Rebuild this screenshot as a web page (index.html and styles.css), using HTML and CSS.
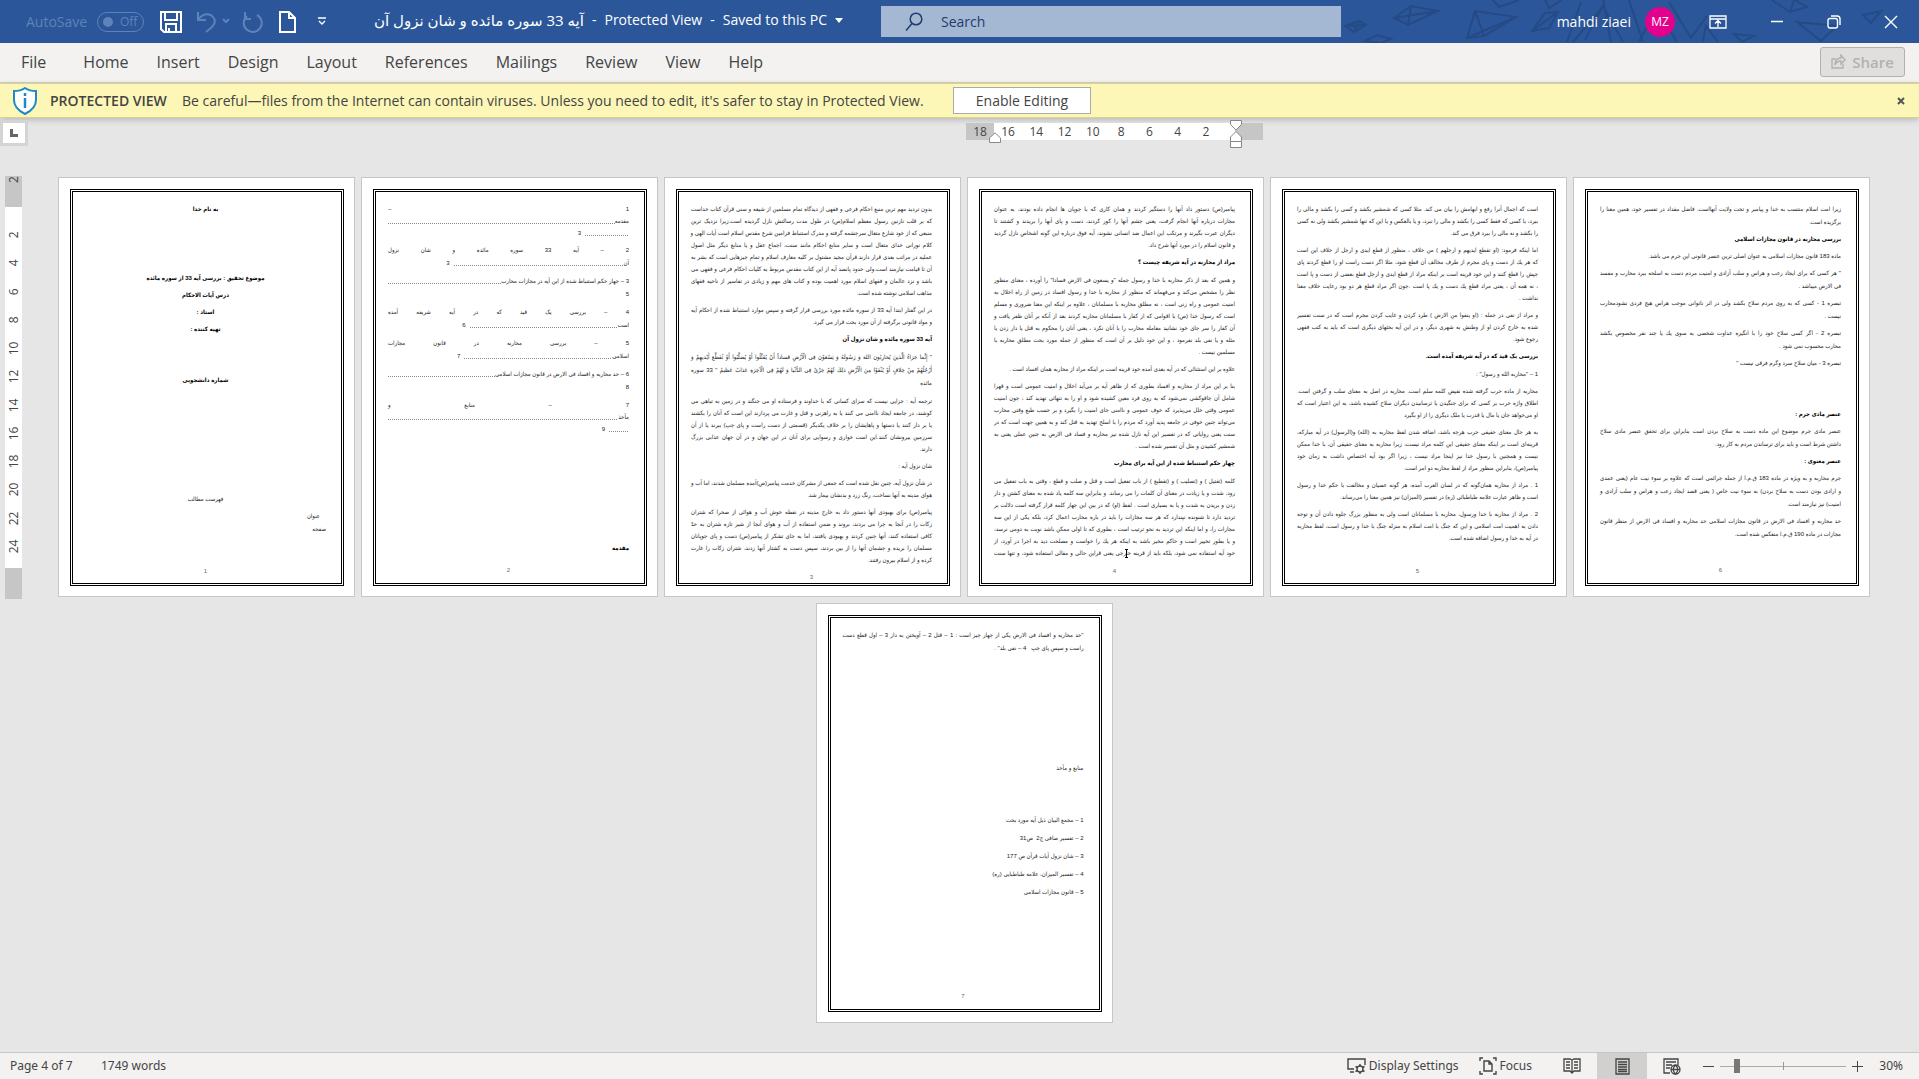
FILE: index.html
```html
<!DOCTYPE html>
<html lang="en">
<head>
<meta charset="utf-8">
<title>Word - Protected View</title>
<link rel="stylesheet" href="styles.css">
</head>
<body>
<header class="titlebar">
  <svg class="planes" width="580" height="43" viewBox="0 0 580 43" fill="none" stroke="#254a85" stroke-width="2" aria-hidden="true">
    <path d="M6 26l14-5 7 4-12 7zM6 26l21-1M15 32l5-11M26 41l12-6 14 4-10 4zM55 18l17-12 27 5-30 14zM72 6l-3 19M55 18l44-7M128 38l8-27 41 6-32 19zM136 11l9 25M128 38l49-21M193 31l13-18 13-1-9 16zM193 31l26-19M154 0l6 7 20-7M206 0l4 8 13-8M228 42l14-40M234 42l30-36 20 36M264 6l-18 34M264 0l8 42M290 0l14 42M300 42l18-34 20 34M330 2l22 36 16-22M364 41l3-15 12 16M395 34l20 2-12 6zM433 0l18 12 17-5-12-7M451 12l4-12M458 22l40 4-16 15zM458 22l24 19M524 15l18-4-10 12zM524 15l8 8"/>
  </svg>
  <div class="quick">
    <span class="autosave">AutoSave</span>
    <button class="toggle" aria-label="AutoSave off"><i></i>Off</button>
    <button class="ic" aria-label="Save"><svg width="22" height="22" viewBox="0 0 22 22" fill="none" stroke="#fff" stroke-width="2"><path d="M1 1h20v20H4l-3-3zM5 1v8h12V1M6 21v-8h10v8M9 17v4"/></svg></button>
    <button class="ic dim undo" aria-label="Undo"><svg width="34" height="22" viewBox="0 0 34 22" fill="none" stroke="#5f82b8" stroke-width="2"><path d="M2 1v8h8M2 9C6 3 13 1 17 6s1 9-7 15M27 8l3 3 3-3"/></svg></button>
    <button class="ic dim redo" aria-label="Redo"><svg width="22" height="22" viewBox="0 0 22 22" fill="none" stroke="#5f82b8" stroke-width="2"><path d="M4 1v7h6M6 5A9 9 0 1 0 16 4"/></svg></button>
    <button class="ic doc" aria-label="New"><svg width="17" height="22" viewBox="0 0 17 22" fill="none" stroke="#fff" stroke-width="2"><path d="M1 1h9l6 6v14H1zM10 1v6h6"/></svg></button>
    <button class="ic more" aria-label="Customize"><svg width="10" height="9" viewBox="0 0 10 9" fill="none" stroke="#fff" stroke-width="1.4"><path d="M1 1h8M2 4l3 3 3-3"/></svg></button>
  </div>
  <h1 class="doc-title"><bdi lang="fa">آیه 33 سوره مائده و شان نزول آن</bdi><span>-</span><span>Protected View</span><span>-</span><span>Saved to this PC</span><svg width="8" height="5" viewBox="0 0 8 5"><path d="M0 0h8L4 5z" fill="#fff"/></svg></h1>
  <label class="search"><svg width="18" height="19" viewBox="0 0 18 19" fill="none" stroke="#1e3c6e" stroke-width="1.5"><circle cx="11" cy="7" r="5.8"/><path d="M7 11.500l-6 7"/></svg><input type="text" placeholder="Search" aria-label="Search"></label>
  <div class="account">
    <span class="user">mahdi ziaei</span>
    <span class="avatar">MZ</span>
    <button class="ic" aria-label="Ribbon display"><svg width="18" height="14" viewBox="0 0 18 14" fill="none" stroke="#fff" stroke-width="1.300"><path d="M1 1h16v12H1zM1 4h16M9 12V6M6 8.500l3-3 3 3"/></svg></button>
    <button class="ic" aria-label="Minimize"><svg width="14" height="14" viewBox="0 0 14 14" stroke="#fff" stroke-width="1.500"><path d="M1 6.500h12"/></svg></button>
    <button class="ic" aria-label="Restore"><svg width="14" height="14" viewBox="0 0 14 14" fill="none" stroke="#fff" stroke-width="1.400"><rect x="1" y="3.500" width="9.500" height="9.500" rx="2"/><path d="M4 1h6a3 3 0 0 1 3 3v6"/></svg></button>
    <button class="ic" aria-label="Close"><svg width="14" height="14" viewBox="0 0 14 14" stroke="#fff" stroke-width="1.400"><path d="M1 1l12 12M13 1L1 13"/></svg></button>
  </div>
</header>
<nav class="tabs">
  <a href="#" class="file">File</a><a href="#">Home</a><a href="#">Insert</a><a href="#">Design</a><a href="#">Layout</a><a href="#">References</a><a href="#">Mailings</a><a href="#">Review</a><a href="#">View</a><a href="#">Help</a>
  <button class="share" disabled><svg width="15" height="15" viewBox="0 0 15 15" fill="none" stroke="#b3b1af" stroke-width="1.400"><path d="M5 5H1v9h11v-4M4 11c0-5 3-7 6-7V1l4 5-4 4V7c-3 0-5 1-6 4z"/></svg>Share</button>
</nav>
<section class="message">
  <svg width="26" height="28" viewBox="0 0 26 28" fill="#fff" stroke="#1e88c9" stroke-width="2"><path d="M13 1c3 2 7 3 11 3v9c0 7-5 11-11 14C7 24 2 20 2 13V4c4 0 8-1 11-3z"/><path d="M13 11v10M13 6v3" stroke-width="2.500"/></svg>
  <strong>PROTECTED VIEW</strong>
  <span class="msg">Be careful—files from the Internet can contain viruses. Unless you need to edit, it's safer to stay in Protected View.</span>
  <button class="enable">Enable Editing</button>
  <button class="dismiss" aria-label="Close message"><svg width="8" height="8" viewBox="0 0 8 8" stroke="#555" stroke-width="2"><path d="M1 1l6 6M7 1L1 7"/></svg></button>
</section>
<div class="ruler-row">
  <button class="tabstop" aria-label="Tab stop"><svg width="8" height="8" viewBox="0 0 8 8" fill="none" stroke="#666" stroke-width="3"><path d="M1.500 0v6.500H8"/></svg></button>
  <div class="hruler">
    <div class="edge">18</div>
    <div class="scale"><span>16</span><span>14</span><span>12</span><span>10</span><span>8</span><span>6</span><span>4</span><span>2</span></div>
    <div class="edge"></div>
    <svg class="mark-left" width="12" height="11" viewBox="0 0 12 11" fill="#fff" stroke="#888"><path d="M.5 10.500V6L6 .8 11.500 6v4.500z"/></svg>
    <svg class="mark-right" width="12" height="28" viewBox="0 0 12 28" fill="#fff" stroke="#888"><path d="M.5.5h11v4L6 10 .5 4.500zM.5 21.500V17L6 11.500l5.500 5.500v4.500zM.5 21.500h11v6H.5z"/></svg>
  </div>
</div>
<main class="workspace">
  <div class="vruler">
    <div class="edge top">2</div>
    <div class="scale"><span>2</span><span>4</span><span>6</span><span>8</span><span>10</span><span>12</span><span>14</span><span>16</span><span>18</span><span>20</span><span>22</span><span>24</span></div>
    <div class="edge bottom"></div>
  </div>
  <div class="pages" lang="fa" dir="rtl">
    <article class="page"><div class="frame cover">
      <h2>به نام خدا</h2>
      <h2 class="after-lg">موضوع تحقیق : بررسی آیه 33 از سوره مائده</h2>
      <h2>درس آیات الاحکام</h2>
      <h2>استاد :</h2>
      <h2>تهیه کننده :</h2>
      <h2 class="after-md">شماره دانشجویی</h2>
      <p class="center after-xl">فهرست مطالب</p>
      <p class="indent">عنوان</p>
      <p class="tight">صفحه</p>
      <footer>1</footer>
    </div></article>

    <article class="page"><div class="frame toc">
      <p class="three"><span class="fill">1 –</span><span class="row">مقدمه<i class="dots"></i></span><span class="row"><i class="dots w44"></i>3</span></p>
      <p><span class="fill">2 – آیه 33 سوره مائده و شان نزول</span><span class="row">آن<i class="dots w170"></i>3</span></p>
      <p><span class="row">3 – چهار حکم استنباط شده از این آیه در مجازات محارب<i class="dots"></i></span><span>5</span></p>
      <p><span class="fill">4 – بررسی یک قید که در آیه شریفه آمده</span><span class="row">است<i class="dots w148"></i>6</span></p>
      <p><span class="fill">5 – بررسی محاربه در قانون مجازات</span><span class="row">اسلامی<i class="dots w148"></i>7</span></p>
      <p><span class="row">6 – حد محاربه و افساد فی الارض در قانون مجازات اسلامی<i class="dots"></i></span><span>8</span></p>
      <p class="three"><span class="fill">7 – منابع و</span><span class="row">مآخذ<i class="dots"></i></span><span class="row"><i class="dots w20"></i>9</span></p>
      <h2 class="after-xl">مقدمه</h2>
      <footer>2</footer>
    </div></article>

    <article class="page"><div class="frame">
      <p><span>بدون تردید مهم ترین منبع احکام فرعی و فقهی از دیدگاه تمام مسلمین از شیعه و سنی قرآن کتاب خداست</span><span>که بر قلب نازنین رسول معظم اسلام(ص) در طول مدت رسالتش نازل گردیده است.زیرا نزدیک ترین</span><span>منبعی که از خود شارع متعال سرچشمه گرفته و مدرک استنباط فرامین شرع مقدس اسلام است آیات الهی و</span><span>کلام نورانی خدای متعال است و سایر منابع احکام مانند سنت، اجماع عقل و یا منابع دیگر مثل اصول</span><span>عملیه در مراتب بعدی قرار دارند.قرآن مجید مشتول بر کلیه معارف اسلام و تمام چیزهایی است که بشر به</span><span>آن تا قیامت نیازمند است.ولی حدود پانصد آیه از این کتاب مقدس مربوط به کلیات احکام فرعی و فقهی می</span><span>باشد و نزد عالمان و فقهای اسلام مورد اهمیت بوده و کتاب های مهم و زیادی در تفاسیر از ناحیه فقهای</span><span>مذاهب اسلامی نوشته شده است.</span></p>
      <p><span>در این گفتار ابتدا آیه 33 از سوره مائده مورد بررسی قرار گرفته و سپس موارد استنباط شده از احکام آیه</span><span>و مواد قانونی برگرفته از آن مورد بحث قرار می گیرد.</span></p>
      <h2>آیه 33 سوره مائده و شان نزول آن</h2>
      <p class="verse"><span>" إِنَّما جَزاءُ الَّذینَ یُحارِبُونَ اللهَ وَ رَسُولَهُ وَ یَسْعَوْنَ فِی الْأَرْضِ فَساداً أَنْ یُقَتَّلُوا أَوْ یُصَلَّبُوا أَوْ تُقَطَّعَ أَیْدیهِمْ وَ</span><span>أَرْجُلُهُمْ مِنْ خِلافٍ أَوْ یُنْفَوْا مِنَ الْأَرْضِ ذلِكَ لَهُمْ خِزْیٌ فِی الدُّنْیا وَ لَهُمْ فِی الْآخِرَةِ عَذابٌ عَظیمٌ " 33 سوره</span><span>مائده</span></p>
      <p><span>ترجمه آیه : جزایی نیست که سزای کسانی که با خداوند و فرستاده او می جنگند و در زمین به تباهی می</span><span>کوشند، در جامعه ایجاد ناامنی می کنند یا به راهزنی و قتل و غارت می پردازند این است که آنان را بکشند</span><span>یا بر دار کنند یا دستها و پاهایشان را بر خلاف یکدیگر (قسمتی از دست راست و پای چپ) ببرند یا از آن</span><span>سرزمین بیرونشان کنند.این است خواری و رسوایی برای آنان در این جهان و در آن جهان عذابی بزرگ</span><span>دارند.</span></p>
      <p><span>شان نزول آیه :</span></p>
      <p><span>در شأن نزول آیه، چنین نقل شده است که  جمعی از مشرکان خدمت پیامبر(ص)آمده مسلمان شدند، اما آب و</span><span>هوای مدینه به آنها نساخت، رنگ  زرد و بدنشان بیمار شد.</span></p>
      <p><span>پیامبر(ص) برای بهبودی آنها دستور داد به خارج مدینه  در نقطه خوش آب و هوائی از صحرا که شتران</span><span>زکات را در آنجا به چرا می بردند، بروند و ضمن استفاده از آب و هوای آنجا از شیر تازه شتران به حدّ</span><span>کافی استفاده کنند، آنها چنین کردند و بهبودی یافتند، اما به جای تشکر از پیامبر(ص) دست و پای چوپانان</span><span>مسلمان را بریده و چشمان آنها را از بین بردند، سپس دست به کشتار آنها زدند، شتران زکات را غارت</span><span>کرده و از اسلام بیرون رفتند.</span></p>
      <footer>3</footer>
    </div></article>

    <article class="page"><div class="frame">
      <p><span>پیامبر(ص) دستور داد آنها را دستگیر کردند و همان کاری که با چوپان ها انجام داده بودند، به عنوان</span><span>مجازات درباره آنها انجام گرفت، یعنی چشم آنها را کور کردند، دست و پای آنها را بریدند و کشتند تا</span><span>دیگران عبرت بگیرند و مرتکب این اعمال ضد انسانی نشوند، آیه فوق درباره این گونه اشخاص نازل گردید</span><span>و قانون اسلام را در مورد آنها شرح داد.</span></p>
      <h2>مراد از محاربه در آیه شریفه چیست ؟</h2>
      <p><span>و همین که بعد از ذکر محاربه با خدا و رسول جمله  "و یسعون فی الارض فسادا" را آورده ، معنای منظور</span><span>نظر را مشخص می‌کند و می‌فهماند که منظور از محاربه با خدا و رسول افساد در زمین از راه اخلال به</span><span>امنیت عمومی و راه زنی است ، نه مطلق محاربه با مسلمانان ، علاوه بر اینکه این معنا ضروری و مسلم</span><span>است که رسول خدا (ص) با اقوامی که از کفار با مسلمانان محاربه کردند بعد از آنکه بر آنان ظفر یافت و</span><span>آن کفار را سر جای خود نشانید معامله محارب را با آنان نکرد ، یعنی آنان را محکوم به قتل یا دار زدن یا</span><span>مثله و یا نفی بلد نفرمود ، و این خود دلیل بر آن است که منظور از جمله مورد بحث مطلق محاربه با</span><span>مسلمین نیست .</span></p>
      <p><span>علاوه بر این استثنائی که در آیه بعدی آمده خود قرینه است بر اینکه مراد از محاربه همان افساد است .</span></p>
      <p><span>بنا بر این مراد از محاربه و افساد بطوری که از ظاهر آیه بر می‌آید اخلال و امنیت عمومی است و قهرا</span><span>شامل آن چاقوکشی نمی‌شود که به روی فرد معین کشیده شود و او را به تنهائی تهدید کند ، چون امنیت</span><span>عمومی وقتی خلل می‌پذیرد که خوف عمومی و ناامنی جای امنیت را بگیرد و بر حسب طبع وقتی محارب</span><span>می‌تواند چنین خوفی در جامعه پدید آورد که مردم را با اسلح تهدید به قتل کند و به همین جهت است که در</span><span>سنت یعنی روایاتی که در تفسیر این آیه نازل شده نیز محاربه و فساد فی الارض به چنین عملی یعنی به</span><span>شمشیر کشیدن و مثل آن تفسیر شده است .</span></p>
      <h2>چهار حکم استنباط شده از این آیه برای محارب</h2>
      <p class="run-on"><span>کلمه (تقتیل ) و (تصلیب ) و (تقطیع ) از باب تفعیل است و قتل و صلب و قطع ، وقتی به باب تفعیل می</span><span>رود، شدت و یا زیادت در معنای آن کلمات را می رساند. و بنابراین سه کلمه یاد شده به معنای کشتن و دار</span><span>زدن و بریدن به شدت و یا به بسیاری است . لفظ (او) که در بین این چهار کلمه قرار گرفته است دلالت بر</span><span>تردید دارد تا شنونده نپندارد که هر سه مجازات را باید در باره محارب اعمال کرد، بلکه یکی از این سه</span><span>مجازات را، و اما اینکه این تردید به نحو ترتیب است ، بطوری که تا اولی ممکن باشد نوبت به دومی نرسد،</span><span>و یا بطور تخییر است و حاکم مخیر باشد به اینکه هر یك را خواست و مصلحت دید به اجرا در آورد، از</span><span>خود آیه استفاده نمی شود، بلکه باید از قرینه خارجی یعنی قراین حالی و مقالی استفاده شود، و تنها سنت</span></p>
      <footer>4</footer>
      <svg class="ibeam" width="5" height="9" viewBox="0 0 5 9" stroke="#000"><path d="M1 .5h3M2.500 0v9M1 8.500h3"/></svg>
    </div></article>

    <article class="page"><div class="frame">
      <p><span>است که اجمال آنرا رفع و ابهامش را بیان می کند. مثلا کسی که شمشیر بکشد و کسی را بکشد و مالی را</span><span>ببرد، با کسی که فقط کسی را بکشد و مالی را نبرد، و یا بالعکس و یا این که تنها شمشیر بکشد ولی نه کسی</span><span>را بکشد و نه مالی را ببرد فرق می کند.</span></p>
      <p><span> اما اینکه فرمود: (او تقطع ایدیهم و ارجلهم ) من خلاف ، منظور از قطع ایدی و ارجل از خلاف این است</span><span>که هر یك از دست و پای مجرم از طرف مخالف آن قطع شود، مثلا اگر دست راست او را قطع کردند پای</span><span>چپش را قطع کنند و این خود قرینه است بر اینکه مراد از قطع ایدی و ارجل قطع بعضی از دست و پا است</span><span>، نه همه آن ، یعنی مراد قطع یك دست و یك پا است .چون اگر مراد قطع هر دو بود رعایت خلاف معنا</span><span>نداشت .</span></p>
      <p><span>و مراد از نفی در جمله : (او ینفوا من الارض ) طرد کردن و غایب کردن مجرم است که در سنت تفسیر</span><span>شده به خارج کردن او از وطنش به شهری دیگر، و در این آیه بحثهای دیگری است که باید به کتب فقهی</span><span>رجوع شود.</span></p>
      <h2>بررسی یک قید که در آیه شریفه آمده است.</h2>
      <p><span>1 – "محاربه الله و رسول" :</span></p>
      <p><span>محاربه از ماده حرب گرفته شده  نقیض کلمه سلم است. محاربه در اصل به معنای سلب و گرفتن است.</span><span>اطلاق واژه حرب بر کسی که برای جنگیدن یا ترسانیدن دیگران سلاح کشیده باشد، به این اعتبار است که</span><span>او می‌خواهد جان یا مال یا قدرت یا ملک دیگری را از او بگیرد</span></p>
      <p><span>به هر حال معنای حقیقی حرب هرچه باشد، اضافه شدن لفظ محاربه به (الله) و(الرسول) در آیه مبارکه،</span><span>قرینه‌ای است بر اینکه معنای حقیقی این کلمه مراد نیست، زیرا محاربه به معنای حقیقی آن، با خدا ممکن</span><span>نیست و همچنین با رسول خدا نیز اینجا مراد نیست ، زیرا اگر بود آیه اختصاص داشت به زمان خود</span><span>پیامبر(ص)، بنابراین منظور مراد از لفظ محاربه دو امر است.</span></p>
      <p><span>1 . مراد از محاربه همان‌گونه که در لسان العرب آمده، هر گونه عصیان و مخالفت با حکم خدا و رسول</span><span>است و ظاهر عبارت علامه طباطبائی (ره) در تفسیر (المیزان) نیز همین معنا را می‌رساند.</span></p>
      <p><span>2 . مراد از محاربه با خدا ورسول، محاربه با مسلمانان است ولی به منظور بزرگ جلوه دادن آن و توجه</span><span>دادن به اهمیت امت اسلامی و این که جنگ با امت اسلام به منزله جنگ با خدا و رسول است، لفظ محاربه</span><span>در آیه به خدا و رسول اضافه شده است.</span></p>
      <footer>5</footer>
    </div></article>

    <article class="page"><div class="frame loose">
      <p><span>زیرا امت اسلام منتسب به خدا و پیامبر و تحت ولایت آنهااست. فاضل مقداد در تفسیر خود، همین معنا را</span><span>برگزیده است.</span></p>
      <h2>بررسی محاربه در قانون مجازات اسلامی</h2>
      <p><span>ماده 183 قانون مجازات اسلامی به عنوان اصلی ترین عنصر قانونی این جرم می باشد.</span></p>
      <p><span>" هر کسی که برای ایجاد رعب و هراس و سلب آزادی و امنیت مردم دست به اسلحه ببرد محارب و مفسد</span><span>فی الارض میباشد .</span></p>
      <p><span>تبصره 1 - کسی که به روی مردم سلاح بکشد ولی در اثر ناتوانی موجب هراس هیچ فردی نشودمحارب</span><span>نیست .</span></p>
      <p><span>تبصره 2 - اگر کسی سلاح خود را با انگیزه عداوت شخصی به سوی یك یا چند نفر مخصوص بکشد</span><span>محارب محسوب نمی شود .</span></p>
      <p><span>تبصره 3 - میان سلاح سرد وگرم فرقی نیست "</span></p>
      <h2 class="after-md">عنصر مادی جرم :</h2>
      <p><span>عنصر مادی جرم موضوع این ماده دست به سلاح بردن است بنابراین برای تحقق عنصر مادی سلاح</span><span>داشتن شرط است و باید برای ترساندن مردم به کار رود.</span></p>
      <h2>عنصر معنوی :</h2>
      <p><span>جرم محاربه و به ویژه در ماده 183 ق.م.ا از جمله جرائمی است که علاوه بر سوء نیت عام (یعنی عمدی</span><span>و ارادی بودن دست به سلاح بردن) به سوء نیت خاص ( یعنی قصد ایجاد رعب و هراس و سلب آزادی و</span><span>امنیت) نیز نیازمند است.</span></p>
      <p><span>حد محاربه و افساد فی الارض در قانون مجازات اسلامی حد محاربه و افساد فی الارض از منظر قانون</span><span>مجازات در ماده 190 ق.م.ا منعکس شده است.</span></p>
      <footer>6</footer>
    </div></article>

    <article class="page"><div class="frame toc">
      <p><span class="fill">"حد محاربه و افساد فی الارض یکی از چهار چیز است : 1 – قتل 2 – آویختن به دار  3 – اول قطع دست</span><span>راست و سپس پای چپ &nbsp; 4 – نفی بلد" .</span></p>
      <p class="after-xl">منابع و مآخذ</p>
      <p class="after-md">1 – مجمع البیان ذیل آیه مورد بحث</p>
      <p>2 – تفسیر صافی ج2 &nbsp;ص31</p>
      <p>3 – شان نزول آیات قرآن ص 177</p>
      <p>4 – تفسیر المیزان، علامه طباطبایی (ره)</p>
      <p>5 – قانون مجازات اسلامی</p>
      <footer>7</footer>
    </div></article>
  </div>
</main>
<footer class="status">
  <span class="pg">Page 4 of 7</span><span>1749 words</span>
  <div class="tools">
    <button class="tool"><svg width="19" height="18" viewBox="0 0 19 18" fill="none" stroke="#444" stroke-width="1.400"><path d="M7 12H1V2h17v6M3 15h4"/><circle cx="13" cy="12" r="3"/><path d="M13 7v2M13 15v2M8.500 9.500l2 1M15.500 13.500l2 1M8.500 14.500l2-1M15.500 10.500l2-1"/></svg>Display Settings</button>
    <button class="tool focus"><svg width="18" height="18" viewBox="0 0 18 18" fill="none" stroke="#444" stroke-width="1.400"><path d="M4 1H1v3M14 1h3v3M1 14v3h3M17 14v3h-3M5 4h5l3 3v7H5zM10 4v3h3"/></svg>Focus</button>
    <button class="view" aria-label="Read mode"><svg width="18" height="16" viewBox="0 0 18 16" fill="none" stroke="#444" stroke-width="1.300"><path d="M1 1h6l2 1 2-1h6v12h-6l-2 2-2-2H1zM9 2v12M3 4h4M3 7h4M3 10h4M11 4h4M11 7h4M11 10h4"/></svg></button>
    <button class="view active" aria-label="Print layout"><svg width="15" height="17" viewBox="0 0 15 17" fill="none" stroke="#444" stroke-width="1.300"><path d="M1 1h13v15H1zM3 4h9M3 6.500h9M3 9h9M3 11.500h9M3 13.500h9"/></svg></button>
    <button class="view" aria-label="Web layout"><svg width="18" height="17" viewBox="0 0 18 17" fill="none" stroke="#444" stroke-width="1.300"><path d="M7 15H1V1h14v6M3 4h10M3 7h6M3 10h4"/><circle cx="12.500" cy="11.500" r="4.500"/><path d="M8 11.500h9M12.500 7c-3 3-3 6 0 9M12.500 7c3 3 3 6 0 9"/></svg></button>
    <button class="zoom-btn" aria-label="Zoom out"><svg width="11" height="11" viewBox="0 0 11 11" stroke="#444"><path d="M0 5.500h11"/></svg></button>
    <input type="range" min="0" max="100" value="12" aria-label="Zoom">
    <button class="zoom-btn" aria-label="Zoom in"><svg width="11" height="11" viewBox="0 0 11 11" stroke="#444"><path d="M0 5.500h11M5.500 0v11"/></svg></button>
    <span class="pct">30%</span>
  </div>
</footer>
</body>
</html>
```
FILE: styles.css
```css
* { box-sizing: border-box; margin: 0; padding: 0; }
body { min-height: 100vh; display: flex; flex-direction: column; background: #e6e6e6; color: #444; font: 14px/20px "Open Sans", "Noto Sans", "DejaVu Sans", sans-serif; }
button { font: inherit; color: inherit; background: none; border: 0; display: flex; align-items: center; }
a { color: inherit; text-decoration: none; }
svg { flex: none; }

/* title bar */
.titlebar { position: relative; display: flex; align-items: center; height: 43px; background: #2b579a; color: #fff; }
.planes { position: absolute; right: 0; top: 0; }
.quick { display: flex; align-items: center; width: 374px; padding-left: 26px; }
.autosave { color: #5f82b8; width: 71px; }
.toggle { width: 47px; height: 20px; border: 1px solid #5f82b8; border-radius: 10px; color: #5f82b8; font-size: 12px; gap: 7px; padding-left: 5px; margin-right: 16px; }
.toggle i { width: 10px; height: 10px; border-radius: 50%; background: #5f82b8; }
.undo { margin-left: 14px; }
.redo { margin-left: 11px; }
.doc { margin-left: 16px; }
.more { margin-left: 21px; }
.doc-title { display: flex; align-items: center; gap: 8px; width: 507px; padding-bottom: 3px; font-size: 14px; font-weight: 400; white-space: nowrap; }
.doc-title bdi { font-size: 15px; }
.search { position: relative; display: flex; align-items: center; flex: 0 1 460px; height: 31px; background: #a5b8d3; padding-left: 24px; gap: 18px; }
.search input { flex: 1; min-width: 0; border: 0; background: none; font: inherit; outline: 0; }
.search input::placeholder { color: #1e3c6e; opacity: 1; }
.account { position: relative; display: flex; align-items: center; margin-left: auto; padding-right: 21px; gap: 43px; }
.user { margin-right: -29px; }
.avatar { width: 30px; height: 30px; line-height: 30px; border-radius: 50%; background: #e3008c; text-align: center; font-size: 12px; margin-right: -9px; }

/* ribbon tabs */
.tabs { display: flex; align-items: center; gap: 28px; height: 40px; padding: 0 14px 2px 21px; background: #f3f2f1; font-size: 16px; border-bottom: 1px solid #d2d0ce; }
.tabs .file { margin-right: 9px; }
.share { margin-left: auto; height: 30px; width: 85px; justify-content: center; gap: 6px; border: 1px solid #b3b1af; border-radius: 3px; background: #e1dfdd; color: #b3b1af; font-weight: 600; font-size: 15px; }

/* protected view message */
.message { display: flex; align-items: center; height: 35px; padding: 0 14px 0 12px; background: #fcf7b6; border: solid #d8d48c; border-width: 1px 0; box-shadow: 0 2px 6px #0003; }
.message strong { width: 132px; margin-left: 12px; font-weight: 600; white-space: nowrap; }
.msg { min-width: 771px; white-space: nowrap; }
.enable { width: 138px; height: 27px; justify-content: center; background: #fff; border: 1px solid #ababab; }
.dismiss { margin-left: auto; }

/* rulers */
.ruler-row { display: flex; height: 58px; padding-top: 2px; }
.tabstop { width: 28px; height: 26px; justify-content: center; align-items: center; background: #fff; border: 3px solid #d4d4d4; }
.hruler { position: relative; display: flex; width: 297px; height: 17px; margin: 3px auto; left: 141px; background: #fff; font-size: 12px; line-height: 17px; text-align: center; }
.hruler .edge { width: 28px; background: #c6c6c6; }
.hruler .scale { flex: 1; display: flex; padding-right: 15px; }
.hruler .scale span { flex: 1; }
.mark-left { position: absolute; left: 23px; top: 9px; }
.mark-right { position: absolute; left: 264px; top: -3px; }
.workspace { flex: 1; display: flex; align-items: flex-start; padding-bottom: 28px; }
.vruler { width: 17px; margin: 0 0 0 5px; background: #fff; font-size: 12px; line-height: 17px; }
.vruler .edge { height: 31px; background: #c6c6c6; }
.vruler .scale { display: flex; flex-direction: column; height: 361px; padding: 14px 0 8px; }
.vruler span, .vruler .top { writing-mode: vertical-rl; transform: rotate(180deg); text-align: center; }
.vruler .top { width: 17px; text-align: right; }
.vruler span { flex: 1; width: 17px; }

/* document pages */
.pages { flex: 1; display: flex; flex-wrap: wrap; justify-content: center; gap: 6px; padding: 1px 17px 0 4px; direction: ltr; }
.page { width: 297px; height: 420px; padding: 11px 10px 10px 11px; background: #fff; border: 1px solid #c6c6c6; direction: rtl; }
.frame { position: relative; display: flex; flex-direction: column; gap: 5px; height: 100%; padding: 11px 15px 6px 12px; border: 3px double #000; color: #222; font: 6px/12px "Liberation Sans", "DejaVu Sans Condensed", "DejaVu Sans", sans-serif; }
.frame p, .frame h2 { white-space: nowrap; }
.frame p span { display: block; text-align-last: justify; }
.frame p span:last-child { text-align-last: start; }
.frame p.run-on span { text-align-last: justify; }
.frame h2 { font-size: 6px; line-height: 13px; font-weight: 700; color: #000; }
.frame footer { margin-top: auto; text-align: center; color: #666; }
.ibeam { position: absolute; left: 142px; top: 357px; }
.loose { line-height: 13px; gap: 4px; }
.toc, .verse { line-height: 13px; }
.three, .cover h2 { line-height: 12px; }
.cover h2, .center { text-align: center; }
.cover .indent { padding-right: 6px; }
.cover .tight { margin-top: -4px; }
.frame .after-md { margin-top: 34px; }
.frame .after-lg { margin-top: 52px; }
.frame .after-xl { margin-top: 102px; }
.toc p .fill { text-align-last: justify; }
.toc p .row { display: flex; align-items: center; }
.dots { flex: 1; height: 1px; margin: 4px 0 0; background: repeating-linear-gradient(90deg, #888 0 1px, #fff 1px 2px); }
.w20, .w44, .w148, .w170 { flex: none; margin-left: 4px; }
.w20 { width: 20px; }
.w44 { width: 44px; }
.w148 { width: 148px; }
.w170 { width: 170px; }

/* status bar */
.status { display: flex; align-items: center; height: 27px; padding: 0 16px 0 10px; background: #f3f2f1; border-top: 1px solid #c8c6c4; font-size: 12px; font-family: "Noto Sans", "Open Sans", sans-serif; }
.pg { width: 91px; }
.tools { display: flex; align-items: center; height: 100%; margin-left: auto; }
.tool { gap: 3px; }
.focus { margin: 0 15px 0 20px; }
.view { width: 50px; height: 100%; justify-content: center; }
.active { background: #d2d0ce; }
.zoom-btn { margin: 0 6px; }
input[type=range] { appearance: none; width: 126px; height: 14px; background: linear-gradient(#999, #999) 50% 50%/1px 8px no-repeat, linear-gradient(#aaa, #aaa) 50% 50%/100% 1px no-repeat; }
input[type=range]::-webkit-slider-thumb { appearance: none; width: 6px; height: 14px; background: #777; }
.pct { width: 34px; text-align: right; }
```
